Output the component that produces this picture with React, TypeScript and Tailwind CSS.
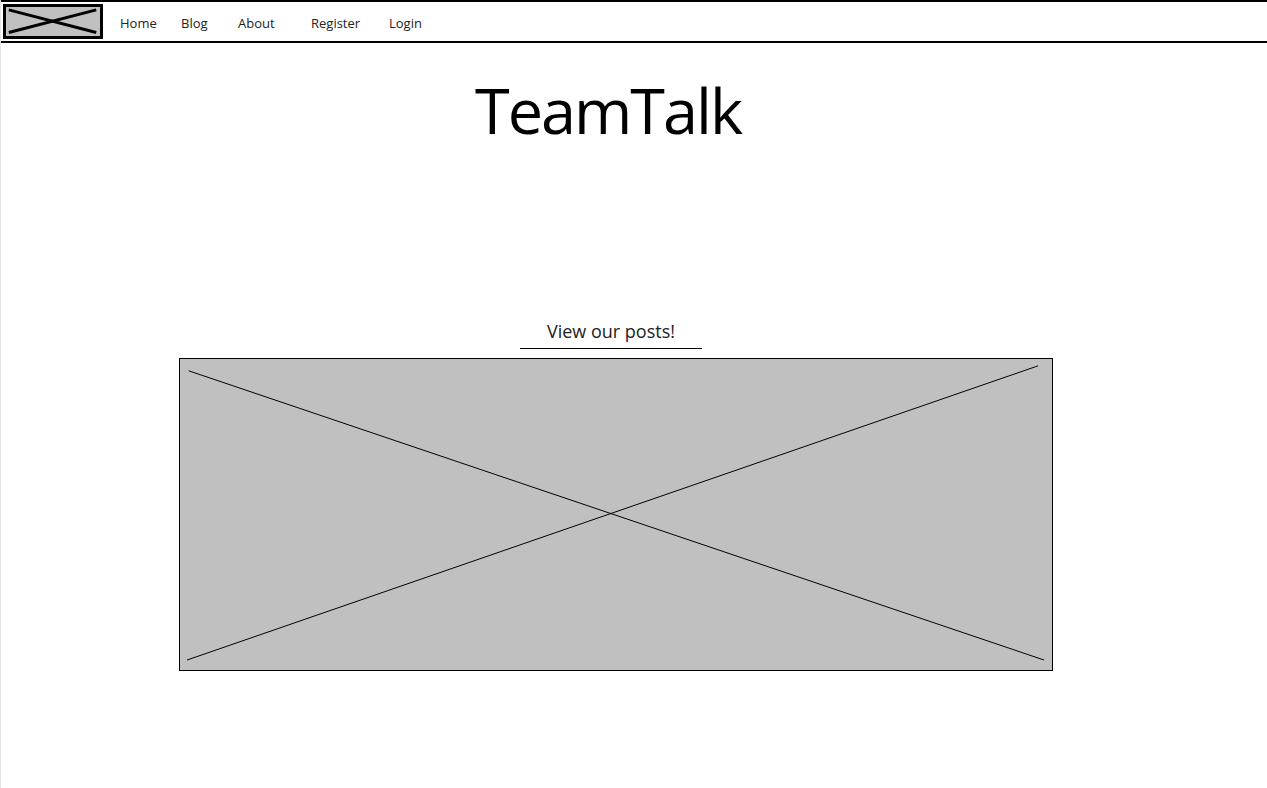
import React from "react"

const navLinks = [
    { label: "Home", w: "w-[61px]" },
    { label: "Blog", w: "w-[57px]" },
    { label: "About", w: "w-[73px]" },
    { label: "Register", w: "w-[78px]" },
    { label: "Login", w: "w-[50px]" },
]

// placeholder box with a cross, like a wireframe image
function Placeholder({ thick = false }: { thick?: boolean }) {
    if (thick) {
        return (
            <svg className="absolute inset-0 w-full h-full" preserveAspectRatio="none" viewBox="0 0 100 100">
                <line x1="3" y1="10" x2="96" y2="88" stroke="black" strokeWidth={3} vectorEffect="non-scaling-stroke" />
                <line x1="3" y1="88" x2="96" y2="10" stroke="black" strokeWidth={3} vectorEffect="non-scaling-stroke" />
            </svg>
        )
    }
    return (
        <svg className="absolute inset-0 w-full h-full" preserveAspectRatio="none" viewBox="0 0 100 100">
            <line x1="1" y1="3.8" x2="99.1" y2="96.8" stroke="black" strokeWidth={1} vectorEffect="non-scaling-stroke" />
            <line x1="0.8" y1="96.8" x2="98.4" y2="2.2" stroke="black" strokeWidth={1} vectorEffect="non-scaling-stroke" />
        </svg>
    )
}

export default function App() {
    return (
        <div className="min-h-[788px] w-full bg-white border-l border-[#e4e4e4] font-['Open_Sans',sans-serif] text-black">
            {/* Top nav */}
            <header className="h-[43px] border-t-2 border-b-2 border-black flex items-center pl-[2px]">
                <div className="relative w-[100px] h-[35px] border-[3px] border-black bg-[#c0c0c0]">
                    <Placeholder thick />
                </div>
                <nav className="flex items-center ml-[17px] text-[13px] text-[#222] mt-[5px]">
                    {navLinks.map((l) => (
                        <a key={l.label} href="#" className={l.w}>
                            {l.label}
                        </a>
                    ))}
                </nav>
            </header>

            {/* Main */}
            <main className="ml-[178px] w-[874px] flex flex-col items-center">
                <h1 className="mt-[33px] -ml-[16px] text-[63px] leading-[67px] tracking-[-2px]">TeamTalk</h1>

                <div className="mt-[176px] -ml-[10px] flex flex-col items-center">
                    <button className="text-[18px] leading-[24px] text-[#222] w-[182px] pb-[5px] border-b border-black">
                        View our posts!
                    </button>
                </div>

                <div className="relative mt-[9px] w-[874px] h-[313px] border border-black bg-[#c0c0c0]">
                    <Placeholder />
                </div>
            </main>
        </div>
    )
}
